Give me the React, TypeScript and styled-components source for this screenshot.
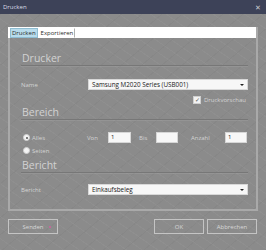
import React from "react";
import styled, { createGlobalStyle } from "styled-components";

const GlobalStyle = createGlobalStyle`
  html, body {
    margin: 0;
    padding: 0;
    width: 266px;
    height: 250px;
    overflow: hidden;
    font-family: "Open Sans", "Noto Sans", sans-serif;
  }
`;

const Window = styled.div`
  width: 266px;
  height: 250px;
  display: flex;
  flex-direction: column;
  background-color: #8b8b8b;
  background-image: repeating-linear-gradient(
      35deg,
      rgba(255, 255, 255, 0.035) 0px,
      rgba(255, 255, 255, 0.035) 1px,
      transparent 1px,
      transparent 9px
    ),
    repeating-linear-gradient(
      -40deg,
      rgba(0, 0, 0, 0.03) 0px,
      rgba(0, 0, 0, 0.03) 1px,
      transparent 1px,
      transparent 13px
    );
`;

const TitleBar = styled.div`
  height: 14px;
  flex: none;
  display: flex;
  align-items: center;
  justify-content: space-between;
  padding: 0 5px 0 3px;
  background: #3d4258;
  color: #dcdde6;
  font-size: 6px;
`;

const Close = styled.span`
  font-size: 7px;
  color: #c9cad2;
  line-height: 1;
`;

const Body = styled.div`
  flex: 1;
  display: flex;
  flex-direction: column;
  padding: 13px 8px 0 8px;
`;

const TabStrip = styled.div`
  height: 10px;
  display: flex;
  align-items: stretch;
  background: #ffffff;
  padding: 1px 0 0 2px;
  border-right: 2px solid #a9a9a9;
`;

const Tab = styled.div<{ $active?: boolean }>`
  font-size: 6px;
  line-height: 8px;
  padding: 0 1px;
  color: #2a2a2a;
  background: ${(p) => (p.$active ? "#b8dcec" : "transparent")};
  border: 1px solid ${(p) => (p.$active ? "#8fbdd2" : "transparent")};
  border-right: 1px solid ${(p) => (p.$active ? "#8fbdd2" : "#b0b0b0")};
  margin-right: 1px;
  height: 8px;
`;

const Panel = styled.div`
  border: 2px solid #a9a9a9;
  border-top: none;
  padding: 0 8px 14px 11px;
  display: flex;
  flex-direction: column;
`;

const SectionHeader = styled.div<{ $top: number }>`
  margin-top: ${(p) => p.$top}px;
  font-size: 10.5px;
  line-height: 14px;
  color: #d2d2d2;
  padding-left: 1px;
  border-bottom: 1px solid #777777;
  box-shadow: 0 1px 0 rgba(255, 255, 255, 0.08);
`;

const Row = styled.div<{ $top: number }>`
  margin-top: ${(p) => p.$top}px;
  display: flex;
  align-items: center;
`;

const Label = styled.span<{ $w?: number }>`
  width: ${(p) => (p.$w ? `${p.$w}px` : "auto")};
  flex: none;
  font-size: 6px;
  color: #d4d4d4;
`;

const Select = styled.div`
  flex: 1;
  height: 11px;
  background: #f7f7f7;
  border: 1px solid #d8d8d8;
  box-sizing: border-box;
  display: flex;
  align-items: center;
  justify-content: space-between;
  padding: 0 3px 0 3px;
  font-size: 6.3px;
  color: #202020;
`;

const Arrow = styled.span`
  width: 0;
  height: 0;
  border-left: 2px solid transparent;
  border-right: 2px solid transparent;
  border-top: 2px solid #222;
`;

const CheckRow = styled.div`
  margin-top: 5px;
  height: 10px;
  display: flex;
  align-items: center;
  padding-left: 172px;
  gap: 3px;
`;

const CheckBox = styled.span`
  width: 6px;
  height: 6px;
  background: #f2f2f2;
  border: 1px solid #cfcfcf;
  display: flex;
  align-items: center;
  justify-content: center;
  font-size: 6px;
  line-height: 1;
  color: #555;
`;

const RangeRow = styled.div`
  margin-top: 12px;
  display: flex;
  align-items: flex-start;
`;

const RadioGroup = styled.div`
  width: 66px;
  flex: none;
  display: flex;
  flex-direction: column;
  gap: 2px;
  padding-left: 2px;
  box-sizing: border-box;
`;

const RadioItem = styled.div`
  height: 11px;
  display: flex;
  align-items: center;
  gap: 2px;
  font-size: 6px;
  color: #d4d4d4;
`;

const Radio = styled.span<{ $checked?: boolean }>`
  width: 5px;
  height: 5px;
  border-radius: 50%;
  background: #f4f4f4;
  border: 1px solid #d0d0d0;
  box-sizing: content-box;
  display: flex;
  align-items: center;
  justify-content: center;
  &::after {
    content: "";
    width: 2px;
    height: 2px;
    border-radius: 50%;
    background: ${(p) => (p.$checked ? "#555" : "transparent")};
  }
`;

const Fields = styled.div`
  display: flex;
  align-items: center;
  height: 11px;
`;

const NumInput = styled.div<{ $w: number; $gap: number }>`
  width: ${(p) => p.$w}px;
  height: 11px;
  margin-right: ${(p) => p.$gap}px;
  box-sizing: border-box;
  background: #f7f7f7;
  border: 1px solid #d6d6d6;
  font-size: 6px;
  line-height: 9px;
  padding-left: 2px;
  color: #222;
`;

const Footer = styled.div`
  margin-top: 8px;
  display: flex;
  align-items: center;
`;

const Button = styled.div<{ $ml?: number }>`
  width: 50px;
  height: 15px;
  margin-left: ${(p) => p.$ml ?? 0}px;
  box-sizing: border-box;
  border: 1px solid #c4c4c4;
  display: flex;
  align-items: center;
  justify-content: center;
  font-size: 6px;
  color: #d8d8d8;
  position: relative;
`;

const Marker = styled.span`
  position: absolute;
  right: 6px;
  top: 6px;
  width: 2px;
  height: 2px;
  border-radius: 50%;
  background: #d35fa0;
`;

export default function App() {
  return (
    <>
      <GlobalStyle />
      <Window>
        <TitleBar>
          <span>Drucken</span>
          <Close>✕</Close>
        </TitleBar>
        <Body>
          <TabStrip>
            <Tab $active>Drucken</Tab>
            <Tab>Exportieren</Tab>
          </TabStrip>
          <Panel>
            <SectionHeader $top={13}>Drucker</SectionHeader>
            <Row $top={13}>
              <Label $w={67}>Name</Label>
              <Select>
                <span>Samsung M2020 Series (USB001)</span>
                <Arrow />
              </Select>
            </Row>
            <CheckRow>
              <CheckBox>✓</CheckBox>
              <Label>Druckvorschau</Label>
            </CheckRow>
            <SectionHeader $top={0}>Bereich</SectionHeader>
            <RangeRow>
              <RadioGroup>
                <RadioItem>
                  <Radio $checked />
                  Alles
                </RadioItem>
                <RadioItem>
                  <Radio />
                  Seiten
                </RadioItem>
              </RadioGroup>
              <Fields>
                <Label $w={21}>Von</Label>
                <NumInput $w={23} $gap={8}>
                  1
                </NumInput>
                <Label $w={17}>Bis</Label>
                <NumInput $w={22} $gap={13} />
                <Label $w={34}>Anzahl</Label>
                <NumInput $w={22} $gap={0}>
                  1
                </NumInput>
              </Fields>
            </RangeRow>
            <SectionHeader $top={2}>Bericht</SectionHeader>
            <Row $top={11}>
              <Label $w={67}>Bericht</Label>
              <Select>
                <span>Einkaufsbeleg</span>
                <Arrow />
              </Select>
            </Row>
          </Panel>
          <Footer>
            <Button>
              Senden
              <Marker />
            </Button>
            <Button $ml={96}>OK</Button>
            <Button $ml={3}>Abbrechen</Button>
          </Footer>
        </Body>
      </Window>
    </>
  );
}
